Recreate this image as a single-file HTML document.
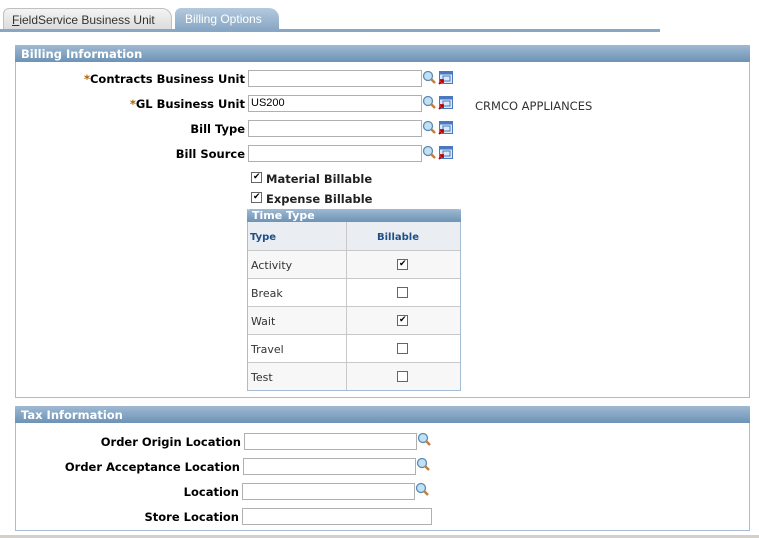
<!DOCTYPE html>
<html><head><style>
*{margin:0;padding:0;box-sizing:border-box}
body{width:759px;height:538px;background:#fff;font-family:"DejaVu Sans",Verdana,sans-serif;font-size:11px;color:#000;position:relative;overflow:hidden}
.a{position:absolute}
.tab{position:absolute;height:22px;border-radius:6px 10px 0 0;font-size:12px;padding:4px 8px 0 8px;font-family:"Liberation Sans",Arial,sans-serif}
.lbl{position:absolute;font-weight:bold;font-size:11.5px;text-align:right;color:#000;white-space:nowrap}
.inp{position:absolute;height:17px;border:1px solid #b0b0b0;background:#fff;font-size:11px;padding:1px 2px;font-family:"Liberation Sans",Arial,sans-serif}
.box{position:absolute;border:1px solid #a5bed6}
.hdr{position:absolute;height:17px;background:linear-gradient(#9fb9d2,#6d93b6);color:#fff;font-weight:bold;font-size:11.5px;padding:2px 6px 0;border-radius:3px 3px 0 0;white-space:nowrap}
.cb{position:absolute;width:11px;height:11px;border:1px solid #666;background:#fff}
.ck::after{content:"✔";font-size:9px;position:absolute;left:1px;top:-1px;color:#000}
.row{position:absolute;left:248px;width:212px;height:28px;border-top:1px solid #c8c8c8}
.row span{position:absolute;left:3px;top:8px;color:#333;font-size:11px}
</style></head><body>
<div class="tab" style="left:3px;top:8px;width:169px;background:linear-gradient(#f4f4f4,#dcdcdc);border:1px solid #c0c0c0;color:#333"><u>F</u>ieldService Business Unit</div>
<div class="tab" style="left:175px;top:8px;width:104px;background:linear-gradient(#b4c9dd,#88a7c4);color:#fff;padding-left:10px">Billing Options</div>
<div class="a" style="left:0;top:29px;width:660px;height:3px;background:#88a7c4"></div>

<div class="box" style="left:15px;top:45px;width:735px;height:353px"></div>
<div class="hdr" style="left:15px;top:45px;width:735px">Billing Information</div>

<div class="lbl" style="left:20px;width:225px;top:72px"><span style="color:#b35e00">*</span>Contracts Business Unit</div>
<div class="inp" style="left:248px;top:70px;width:174px"></div>
<div class="lbl" style="left:20px;width:225px;top:97px"><span style="color:#b35e00">*</span>GL Business Unit</div>
<div class="inp" style="left:248px;top:95px;width:174px">US200</div>
<div class="lbl" style="left:20px;width:225px;top:122px">Bill Type</div>
<div class="inp" style="left:248px;top:120px;width:174px"></div>
<div class="lbl" style="left:20px;width:225px;top:147px">Bill Source</div>
<div class="inp" style="left:248px;top:145px;width:174px"></div>
<div class="a" style="left:475px;top:99px;color:#333;font-size:11.5px">CRMCO APPLIANCES</div>

<svg class="a" style="left:0;top:0" width="759" height="538">
<defs>
<g id="mag"><circle cx="6" cy="6" r="4.5" fill="#bfe0f5" stroke="#5a89b3" stroke-width="1.3"/><line x1="9" y1="9" x2="13" y2="13" stroke="#c08040" stroke-width="2.5"/></g>
<g id="grd"><rect x="0.5" y="0.5" width="13" height="12" fill="#dbe8f8" stroke="#4a78c0"/><rect x="0.5" y="0.5" width="13" height="3" fill="#4a78c0"/><rect x="4" y="5" width="7" height="5" fill="none" stroke="#4a78c0"/><path d="M0 13 L4 9 M1 9 H4 V12" stroke="#c00000" stroke-width="1.8" fill="none"/></g>
</defs>
<use href="#mag" x="422" y="70"/><use href="#grd" x="439" y="71"/>
<use href="#mag" x="422" y="95"/><use href="#grd" x="439" y="96"/>
<use href="#mag" x="422" y="120"/><use href="#grd" x="439" y="121"/>
<use href="#mag" x="422" y="145"/><use href="#grd" x="439" y="146"/>
<use href="#mag" x="417" y="432"/>
<use href="#mag" x="416" y="457"/>
<use href="#mag" x="415" y="482"/>
</svg>

<div class="cb ck" style="left:251px;top:172px"></div>
<div class="lbl" style="left:266px;top:172px;text-align:left;color:#222">Material Billable</div>
<div class="cb ck" style="left:251px;top:192px"></div>
<div class="lbl" style="left:266px;top:192px;text-align:left;color:#222">Expense Billable</div>

<div class="a" style="left:247px;top:209px;width:214px;height:182px;border:1px solid #a5bed6;border-top:none"></div>
<div class="hdr" style="left:247px;top:209px;width:214px;height:13px;padding:0 5px;font-size:11px;line-height:13px">Time Type</div>
<div class="a" style="left:248px;top:222px;width:212px;height:29px;background:#eaeef3"></div>
<div class="a" style="left:250px;top:232px;font-weight:bold;color:#1f4f86;font-size:10px">Type</div>
<div class="a" style="left:377px;top:232px;font-weight:bold;color:#1f4f86;font-size:10px">Billable</div>
<div class="row" style="top:250px;background:#f7f7f7"><span>Activity</span></div>
<div class="row" style="top:278px;background:#fff"><span>Break</span></div>
<div class="row" style="top:306px;background:#f7f7f7"><span>Wait</span></div>
<div class="row" style="top:334px;background:#fff"><span>Travel</span></div>
<div class="row" style="top:362px;background:#f7f7f7;height:28px"><span>Test</span></div>
<div class="a" style="left:346px;top:222px;width:1px;height:168px;background:#c8c8c8"></div>
<div class="cb ck" style="left:397px;top:259px"></div>
<div class="cb" style="left:397px;top:287px"></div>
<div class="cb ck" style="left:397px;top:315px"></div>
<div class="cb" style="left:397px;top:343px"></div>
<div class="cb" style="left:397px;top:371px"></div>

<div class="box" style="left:15px;top:406px;width:735px;height:125px"></div>
<div class="hdr" style="left:15px;top:406px;width:735px">Tax Information</div>
<div class="lbl" style="left:20px;width:221px;top:435px">Order Origin Location</div>
<div class="inp" style="left:244px;top:433px;width:173px"></div>
<div class="lbl" style="left:20px;width:220px;top:460px">Order Acceptance Location</div>
<div class="inp" style="left:243px;top:458px;width:173px"></div>
<div class="lbl" style="left:20px;width:219px;top:485px">Location</div>
<div class="inp" style="left:242px;top:483px;width:173px"></div>
<div class="lbl" style="left:20px;width:219px;top:510px">Store Location</div>
<div class="inp" style="left:242px;top:508px;width:190px"></div>
<div class="a" style="left:0;top:535px;width:759px;height:3px;background:#d4d0c8"></div>
</body></html>
